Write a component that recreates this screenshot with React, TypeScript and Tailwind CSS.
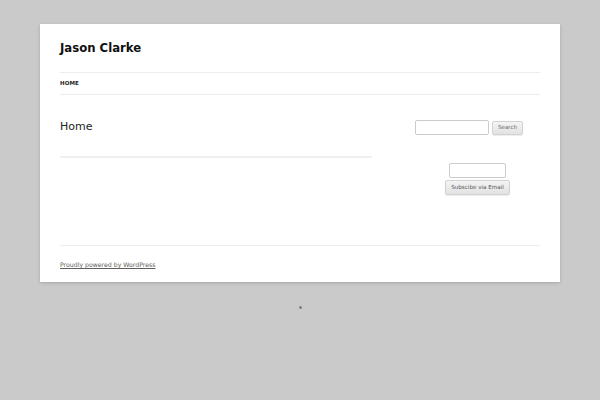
import React from 'react';

const font = { fontFamily: '"DejaVu Sans", "Liberation Sans", sans-serif' };

export default function App() {
  return (
    <div className="min-h-[400px] bg-[#cacaca] pt-[24px]" style={font}>
      {/* Page */}
      <div className="mx-[40px] w-[520px] bg-white px-[20px] shadow-[0_1px_3px_rgba(100,100,100,0.35)]">
        {/* Header */}
        <header className="pt-[16px]">
          <h1 className="text-[11.7px] leading-[16px] font-bold text-[#111]">Jason Clarke</h1>
          <nav className="mt-[16px] flex h-[23px] items-center border-y border-[#ededed]">
            <a className="text-[5.5px] font-bold uppercase tracking-[0.1px] text-[#222]">Home</a>
          </nav>
        </header>

        {/* Main */}
        <div className="flex h-[150px] justify-between">
          <div className="w-[312px] pt-[25px]">
            <h2 className="text-[11px] leading-[14px] text-[#222]">Home</h2>
            <div className="mt-[22px] h-[2px] bg-[#f0f0f0]" />
          </div>

          <aside className="w-[125px] pt-[25px]">
            <form className="flex items-start gap-[3px]">
              <input
                type="text"
                className="h-[15px] w-[74px] rounded-[2px] border border-[#cccccc] bg-white"
              />
              <button
                type="button"
                className="mt-[1px] h-[14px] w-[31px] rounded-[2px] border border-[#d2d2d2] bg-gradient-to-b from-[#f4f4f4] to-[#e2e2e2] text-[5.6px] leading-none text-[#6a6a6a] shadow-[0_1px_1px_rgba(64,64,64,0.1)]"
              >
                Search
              </button>
            </form>

            <div className="mt-[28px] flex flex-col items-center gap-[2px]">
              <input
                type="text"
                className="h-[15px] w-[57px] rounded-[2px] border border-[#cccccc] bg-white"
              />
              <button
                type="button"
                className="h-[15px] w-[65px] rounded-[2px] border border-[#d2d2d2] bg-gradient-to-b from-[#f4f4f4] to-[#e2e2e2] text-[5.6px] leading-none text-[#555] shadow-[0_1px_1px_rgba(64,64,64,0.1)]"
              >
                Subscibe via Email
              </button>
            </div>
          </aside>
        </div>

        {/* Footer */}
        <footer className="border-t border-[#ededed] pt-[14px] pb-[13px]">
          <a className="block text-[6.2px] leading-[9px] text-[#5e5e5e] underline">Proudly powered by WordPress</a>
        </footer>
      </div>

      {/* tiny stats image */}
      <div className="mt-[24px] flex justify-center">
        <div className="h-[3px] w-[3px] border border-[#9a9a9a] bg-[#5a5a5a]" />
      </div>
    </div>
  );
}
